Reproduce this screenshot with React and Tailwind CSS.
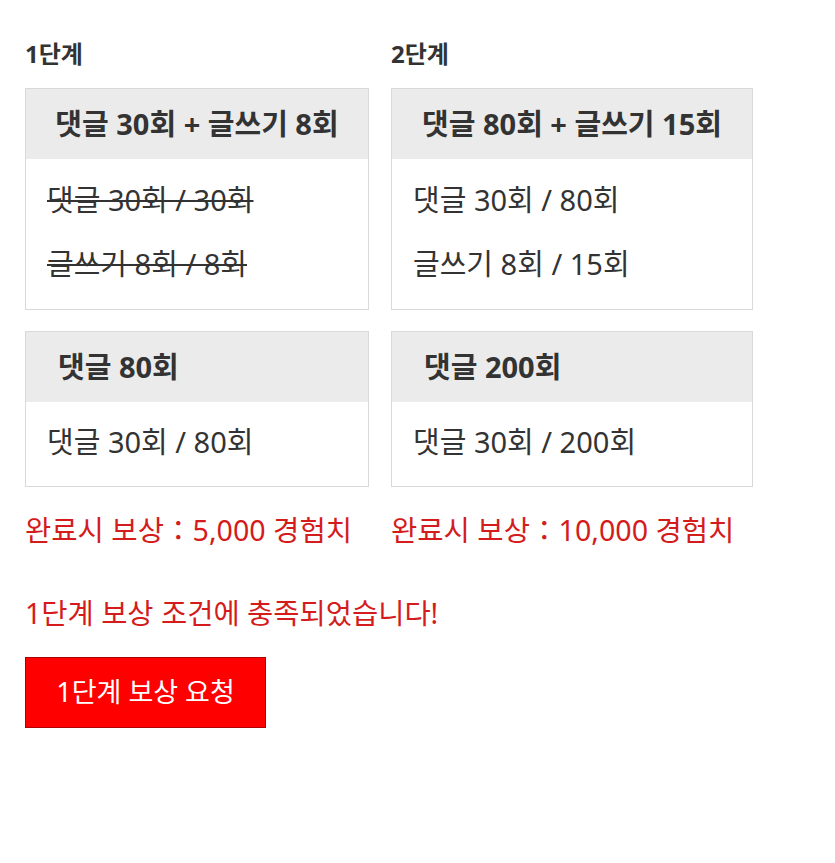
export default function App() {
  const font = { fontFamily: '"Noto Sans", "Noto Sans CJK KR", sans-serif' };
  return (
    <div className="min-h-[863px] w-[835px] bg-white text-[#333]" style={font}>
      <div className="px-[25px] pt-[39px]">
        <div className="grid grid-cols-[344px_362px] gap-x-[22px]">
          {/* Stage 1 */}
          <div className="flex flex-col">
            <div className="h-[30px] text-[24px] font-bold leading-[30px]">1단계</div>
            <div className="mt-[19px] border border-[#d9d9d9]">
              <div className="flex h-[70px] items-center justify-center bg-[#ebebeb] text-[29px] font-bold">
                댓글 30회 + 글쓰기 8회
              </div>
              <div className="flex flex-col gap-[26px] px-[21px] pb-[26px] pt-[22px] text-[29px] leading-[38px]">
                <div className="line-through decoration-2">댓글 30회 / 30회</div>
                <div className="line-through decoration-2">글쓰기 8회 / 8회</div>
              </div>
            </div>
            <div className="mt-[21px] border border-[#d9d9d9]">
              <div className="flex h-[70px] items-center bg-[#ebebeb] pl-[32px] text-[29px] font-bold">
                댓글 80회
              </div>
              <div className="px-[21px] pb-[24px] pt-[20px] text-[29px] leading-[40px]">댓글 30회 / 80회</div>
            </div>
            <div className="mt-[23px] text-[28.6px] leading-[40px] text-[#d41c1c]">완료시 보상：5,000 경험치</div>
          </div>

          {/* Stage 2 */}
          <div className="flex flex-col">
            <div className="h-[30px] text-[24px] font-bold leading-[30px]">2단계</div>
            <div className="mt-[19px] border border-[#d9d9d9]">
              <div className="flex h-[70px] items-center justify-center bg-[#ebebeb] text-[29px] font-bold">
                댓글 80회 + 글쓰기 15회
              </div>
              <div className="flex flex-col gap-[26px] px-[21px] pb-[26px] pt-[22px] text-[29px] leading-[38px]">
                <div>댓글 30회 / 80회</div>
                <div>글쓰기 8회 / 15회</div>
              </div>
            </div>
            <div className="mt-[21px] border border-[#d9d9d9]">
              <div className="flex h-[70px] items-center bg-[#ebebeb] pl-[32px] text-[29px] font-bold">
                댓글 200회
              </div>
              <div className="px-[21px] pb-[24px] pt-[20px] text-[29px] leading-[40px]">댓글 30회 / 200회</div>
            </div>
            <div className="mt-[23px] text-[28.6px] leading-[40px] text-[#d41c1c]">완료시 보상：10,000 경험치</div>
          </div>
        </div>

        <div className="mt-[43px] text-[28.5px] leading-[40px] text-[#d41c1c]">1단계 보상 조건에 충족되었습니다!</div>
        <button className="mt-[24px] flex h-[71px] w-[241px] items-center justify-center border border-[#b00000] bg-[#ff0000] text-[27px] text-white">
          1단계 보상 요청
        </button>
      </div>
    </div>
  );
}
